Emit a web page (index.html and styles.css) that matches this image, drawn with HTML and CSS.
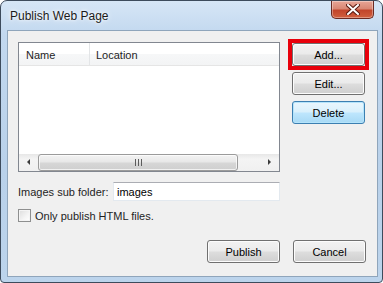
FILE: index.html
```html
<!DOCTYPE html>
<html lang="en">
<head>
  <meta charset="UTF-8">
  <title>Publish Web Page</title>
  <link rel="stylesheet" href="styles.css">
</head>
<body>
  <div class="window">
    <!-- Title bar -->
    <div class="titlebar">
      <span class="title">Publish Web Page</span>
      <div class="close-btn">
        <svg width="14" height="11" viewBox="0 0 14 11">
          <path d="M2 1 L12 10 M12 1 L2 10" stroke="#5a1a10" stroke-width="4" stroke-linecap="square"/>
          <path d="M2 1 L12 10 M12 1 L2 10" stroke="#ffffff" stroke-width="2" stroke-linecap="square"/>
        </svg>
      </div>
    </div>

    <!-- Client area -->
    <div class="client">
      <div class="top-row">
        <div class="listview">
          <div class="list-header">
            <div class="col col-name">Name</div>
            <div class="col col-location">Location</div>
          </div>
          <div class="list-body"></div>
          <div class="hscroll">
            <div class="arrow arrow-left"></div>
            <div class="track">
              <div class="thumb"><span class="grip"></span></div>
            </div>
            <div class="arrow arrow-right"></div>
          </div>
        </div>
        <div class="side-buttons">
          <div class="highlight">
            <button class="btn">Add...</button>
          </div>
          <button class="btn">Edit...</button>
          <button class="btn btn-focus">Delete</button>
        </div>
      </div>

      <div class="field-row">
        <label for="folder" class="field-label">Images sub folder:</label>
        <input type="text" id="folder" class="field-input" value="images">
      </div>

      <div class="check-row">
        <span class="checkbox"></span>
        <span>Only publish HTML files.</span>
      </div>

      <div class="footer">
        <button class="btn">Publish</button>
        <button class="btn">Cancel</button>
      </div>
    </div>
  </div>
</body>
</html>
```

FILE: styles.css
```css
body {
  margin: 0;
  padding: 0;
  font-family: "Liberation Sans", Arial, sans-serif;
  font-size: 11px;
  color: #000;
  background: #fff;
}

.window {
  width: 383px;
  height: 283px;
  box-sizing: border-box;
  border: 1px solid #3d4b5c;
  border-radius: 7px 7px 4px 4px;
  background: linear-gradient(180deg, #d6e6f6 0%, #c2d8ef 12%, #b9d1ea 60%, #bcd4ec 100%);
  display: flex;
  flex-direction: column;
}

.titlebar {
  height: 29px;
  display: flex;
  align-items: flex-start;
  flex-shrink: 0;
}

.title {
  margin: 8px 0 0 9px;
  font-size: 12px;
  color: #1a1a1a;
  white-space: nowrap;
  text-shadow: 0 0 6px #ffffff, 0 0 3px #ffffff;
}

.close-btn {
  margin-left: auto;
  margin-right: 8px;
  width: 43px;
  height: 18px;
  box-sizing: border-box;
  border: 1px solid #6b2a22;
  border-top: none;
  border-radius: 0 0 5px 5px;
  background: linear-gradient(180deg, #e8a596 0%, #d98774 45%, #c2452b 55%, #d0603f 100%);
  box-shadow: inset 0 0 0 1px rgba(255, 255, 255, 0.35);
  display: flex;
  align-items: center;
  justify-content: center;
}

.client {
  flex: 1;
  margin: 0 4px 5px 6px;
  border: 1px solid #8fa5bb;
  background: #f0f0f0;
  padding: 11px 11px 13px 10px;
  display: flex;
  flex-direction: column;
  white-space: nowrap;
}

.top-row {
  display: flex;
  gap: 12px;
}

.listview {
  width: 262px;
  height: 130px;
  box-sizing: border-box;
  border: 1px solid #828790;
  background: #fff;
  display: flex;
  flex-direction: column;
}

.list-header {
  display: flex;
  height: 23px;
  box-sizing: border-box;
  border-bottom: 1px solid #e5e5e5;
  background: linear-gradient(180deg, #ffffff 0%, #ffffff 50%, #f6f7f8 51%, #f3f4f5 100%);
}

.col {
  padding: 6px 0 0 7px;
  color: #1e1e1e;
}

.col-name {
  width: 63px;
  border-right: 1px solid #e3e5e7;
}

.col-location {
  padding-left: 6px;
}

.list-body {
  flex: 1;
}

.hscroll {
  height: 17px;
  display: flex;
  background: linear-gradient(180deg, #e7e7e7 0%, #f4f4f4 30%, #f0f0f0 100%);
}

.arrow {
  width: 19px;
  position: relative;
}

.arrow-left::after,
.arrow-right::after {
  content: "";
  position: absolute;
  top: 5px;
  width: 0;
  height: 0;
  border-top: 3px solid transparent;
  border-bottom: 3px solid transparent;
}

.arrow-left::after {
  left: 8px;
  border-right: 3px solid #3c3c3c;
}

.arrow-right::after {
  left: 8px;
  border-left: 3px solid #3c3c3c;
}

.track {
  flex: 1;
  padding: 0 22px 0 0;
}

.thumb {
  height: 17px;
  box-sizing: border-box;
  border: 1px solid #9b9b9b;
  border-radius: 3px;
  background: linear-gradient(180deg, #f3f3f3 0%, #e8e8e8 45%, #d6d6d6 55%, #cfcfcf 100%);
  box-shadow: inset 0 0 0 1px rgba(255, 255, 255, 0.7);
  display: flex;
  align-items: center;
  justify-content: center;
}

.grip {
  width: 7px;
  height: 7px;
  background: linear-gradient(90deg, #5c5c5c 0 1px, transparent 1px 3px, #5c5c5c 3px 4px, transparent 4px 6px, #5c5c5c 6px 7px);
}

.side-buttons {
  display: flex;
  flex-direction: column;
  gap: 6px;
  padding-top: 1px;
}

.highlight {
  outline: 4px solid #e8000b;
  outline-offset: 0;
  display: flex;
}

.btn {
  width: 73px;
  height: 23px;
  box-sizing: border-box;
  border: 1px solid #707070;
  border-radius: 3px;
  background: linear-gradient(180deg, #f2f2f2 0%, #ebebeb 48%, #dddddd 52%, #cfcfcf 100%);
  box-shadow: inset 0 0 0 1px #fcfcfc;
  font-family: "Liberation Sans", Arial, sans-serif;
  font-size: 11px;
  color: #000;
  padding: 0;
  cursor: pointer;
}

.btn-focus {
  border-color: #3c7fb1;
  background: linear-gradient(180deg, #eaf6fd 0%, #d9f0fc 48%, #bee6fd 52%, #a7d9f5 100%);
  box-shadow: inset 0 0 0 1px #b5e4fb;
}

.field-row {
  display: flex;
  align-items: center;
  margin-top: 10px;
}

.field-label {
  width: 95px;
  flex-shrink: 0;
  color: #1e1e1e;
}

.field-input {
  width: 167px;
  height: 19px;
  box-sizing: border-box;
  border: 1px solid #e3e9ef;
  border-top-color: #abadb3;
  background: #fff;
  font-family: "Liberation Sans", Arial, sans-serif;
  font-size: 11px;
  padding: 0 0 0 3px;
  color: #000;
}

.check-row {
  display: flex;
  align-items: center;
  gap: 4px;
  margin-top: 8px;
  color: #1e1e1e;
}

.checkbox {
  width: 13px;
  height: 13px;
  box-sizing: border-box;
  border: 1px solid #8e8f8f;
  background: linear-gradient(135deg, #dcdcdc 0%, #f4f4f4 60%, #ffffff 100%);
  box-shadow: inset 0 0 0 1px #f4f4f4;
}

.footer {
  margin-top: auto;
  display: flex;
  justify-content: flex-end;
  gap: 13px;
}
```
